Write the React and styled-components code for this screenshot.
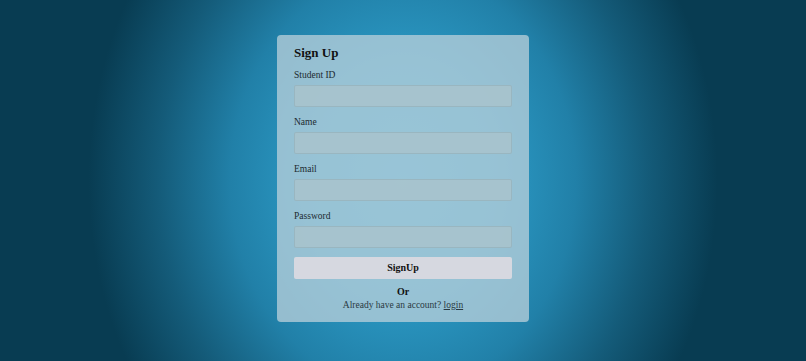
import styled, { createGlobalStyle } from "styled-components";

const GlobalStyle = createGlobalStyle`
  html, body {
    margin: 0;
    padding: 0;
  }
  body {
    font-family: "Liberation Serif", "DejaVu Serif", serif;
    color: #111;
  }
`;

const Page = styled.div`
  width: 100%;
  height: 361px;
  box-sizing: border-box;
  padding-bottom: 5px;
  display: flex;
  align-items: center;
  justify-content: center;
  background: radial-gradient(ellipse 39% 105% at 50% 50%, #30a2cd 0%, #2b98c3 30%, #2180a8 55%, #145b79 78%, #083c52 100%);
`;

const Card = styled.form`
  width: 252px;
  box-sizing: border-box;
  padding: 10px 17px 11px;
  background: rgba(185, 208, 218, 0.76);
  border-radius: 4px;
  display: flex;
  flex-direction: column;
`;

const Title = styled.h2`
  margin: 0 0 9px;
  font-size: 13px;
  line-height: 15px;
  font-weight: 700;
`;

const Label = styled.label`
  font-size: 9.5px;
  line-height: 12px;
  color: #1c2a30;
  margin-bottom: 4px;
`;

const Input = styled.input`
  height: 22px;
  box-sizing: border-box;
  border: 1px solid rgba(140, 170, 180, 0.5);
  border-radius: 2px;
  background: rgba(170, 195, 204, 0.8);
  margin: 0 0 9px;
  outline: none;
`;

const Button = styled.button`
  height: 22px;
  border: none;
  border-radius: 2px;
  background: #d6d8e0;
  font-family: inherit;
  font-size: 10px;
  font-weight: 700;
  color: #111;
`;

const Or = styled.div`
  margin-top: 7px;
  text-align: center;
  font-size: 10px;
  line-height: 12px;
  font-weight: 700;
`;

const Footer = styled.p`
  margin: 1px 0 0;
  text-align: center;
  font-size: 9.5px;
  line-height: 12px;
  color: #2a3a42;

  a {
    color: #2a3a42;
  }
`;

const fields = ["Student ID", "Name", "Email", "Password"];

const App = () => {
  return (
    <>
      <GlobalStyle />
      <Page>
        <Card onSubmit={(e) => e.preventDefault()}>
          <Title>Sign Up</Title>
          {fields.map((f) => (
            <>
              <Label key={f}>{f}</Label>
              <Input type={f === "Password" ? "password" : "text"} />
            </>
          ))}
          <Button type="submit">SignUp</Button>
          <Or>Or</Or>
          <Footer>
            Already have an account? <a href="#">login</a>
          </Footer>
        </Card>
      </Page>
    </>
  );
};

export default App;
